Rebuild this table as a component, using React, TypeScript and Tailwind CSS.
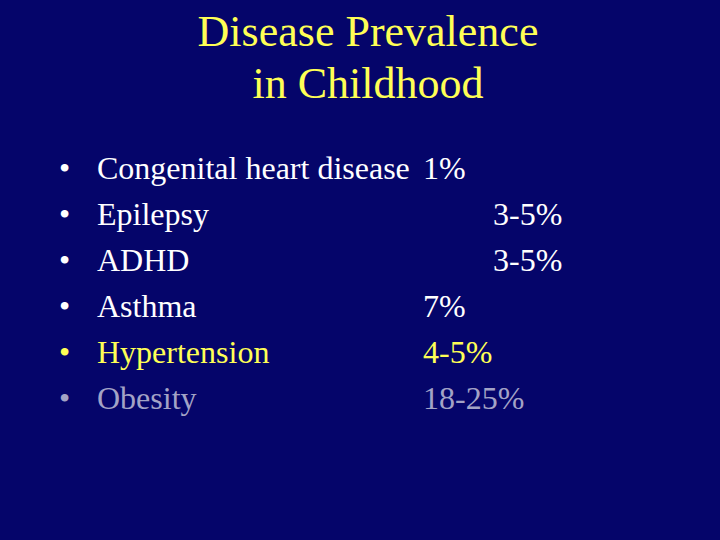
const ROWS = [
  { label: "Congenital heart disease", value: "1%", shift: false, tone: "text-white" },
  { label: "Epilepsy", value: "3-5%", shift: true, tone: "text-white" },
  { label: "ADHD", value: "3-5%", shift: true, tone: "text-white" },
  { label: "Asthma", value: "7%", shift: false, tone: "text-white" },
  { label: "Hypertension", value: "4-5%", shift: false, tone: "text-[#ffff55]" },
  { label: "Obesity", value: "18-25%", shift: false, tone: "text-[#a3a3c6]" },
];

export default function App() {
  return (
    <div
      className="w-[720px] h-[540px] overflow-hidden bg-[#05056a] flex flex-col"
      style={{ fontFamily: '"Liberation Serif", "Times New Roman", serif' }}
    >
      {/* Title */}
      <h1 className="pt-[6px] pl-4 text-center text-[44px] leading-[52px] text-[#ffff55]">
        Disease Prevalence
        <br />
        in Childhood
      </h1>

      {/* Bullet list */}
      <ul className="mt-[35px] pl-[59px] flex flex-col">
        {ROWS.map((row) => (
          <li
            key={row.label}
            className={`flex text-[32px] leading-[46px] ${row.tone}`}
          >
            <span className="w-[38px] shrink-0">•</span>
            <span className="w-[326px] shrink-0 whitespace-nowrap">{row.label}</span>
            <span className={row.shift ? "pl-[70px]" : ""}>{row.value}</span>
          </li>
        ))}
      </ul>
    </div>
  );
}
